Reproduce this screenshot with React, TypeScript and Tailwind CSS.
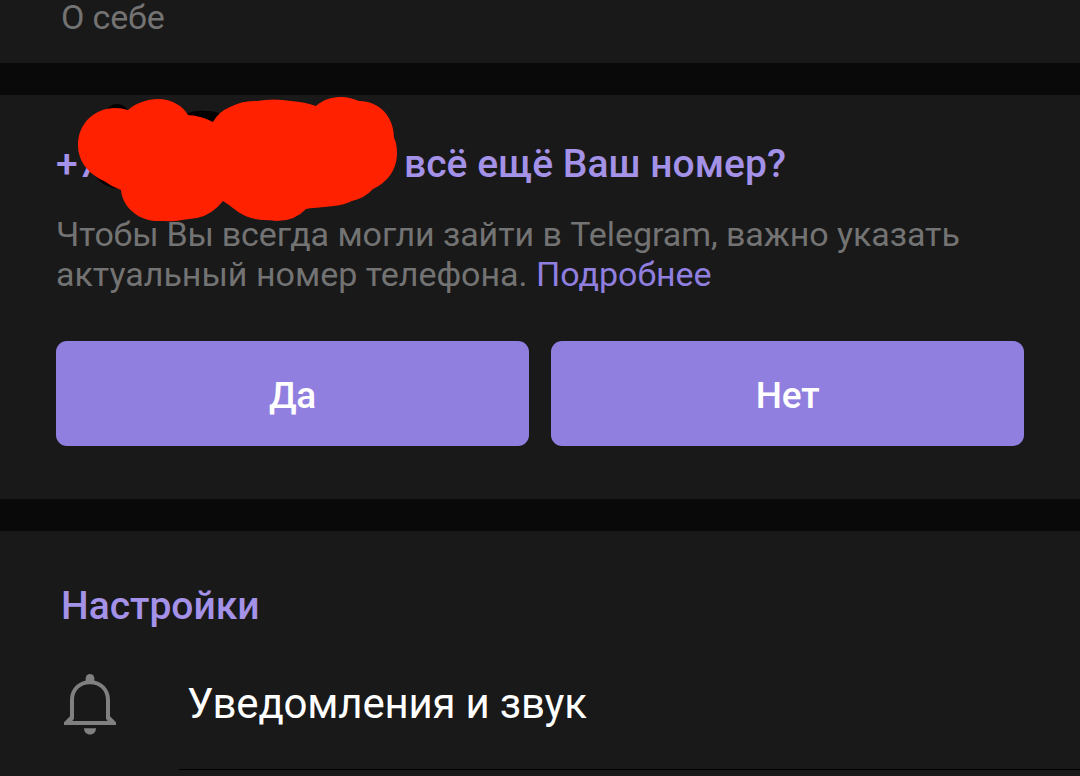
import type { ReactNode } from 'react';

interface ActionButtonProps {
  children: ReactNode;
}

function ActionButton({ children }: ActionButtonProps) {
  return (
    <button
      type="button"
      className="flex h-[105px] flex-1 items-center justify-center rounded-[11px] bg-[#917fe0] pt-1 text-[37px] font-medium tracking-[-0.2px] text-white"
    >
      {children}
    </button>
  );
}

function Divider() {
  return <div className="h-8 shrink-0 bg-[#090909]" />;
}

function BellIcon() {
  return (
    <svg viewBox="0 0 54 62" className="h-[62px] w-[54px] shrink-0" fill="#808080">
      <path d="M22.700 9V5.200a4.300 4.300 0 0 1 8.600 0V9Z" />
      <path
        fillRule="evenodd"
        d="M1 52v-2.800l6-6V27C7 15.500 15.500 7.300 27 7.300S47 15.500 47 27v16.200l6 6V52ZM9.300 48h35.400L43 45.800V27c0-9.500-6.500-15.700-16-15.700S11 17.500 11 27v18.800Z"
      />
      <path d="M21 55.200h12c0 3.800-2.500 6.300-6 6.300s-6-2.500-6-6.300Z" />
    </svg>
  );
}

function Scribble() {
  return (
    <svg
      viewBox="0 0 330 130"
      className="pointer-events-none absolute left-[72px] top-0 h-[130px] w-[330px]"
    >
      <path
        d="M33 18Q37 9 45 9Q52 9 56 15L60 22L34 24ZM110 23L116 18Q124 15 134 16Q142 16 147 18L150 28ZM24 82Q31 92 47 94L48 84Z"
        fill="#000"
      />
      <path
        d="M6 50C6 28 23 13 43 13Q50 13 56 15C64 8 75 4 86 4C100 4 111 11 116 20Q130 21 141 27Q146 17 158 12Q171 5 185 6Q202 3 219 6Q233 7 244 11C252 4 260 2 270 2Q277 2 287 6C307 6 322 21 322 43Q325 48 325 58C325 76 314 88 301 94Q293 103 280 106Q272 110 262 111L242 113Q238 113 234 114Q223 126 205 126Q198 125 190 125C173 124 162 114 157 110L151 106Q140 120 125 123Q117 124 110 125Q101 127 93 126L84 126C64 125 50 110 49 95Q40 92 32 86C17 79 6 67 6 50Z"
        fill="#ff2100"
      />
    </svg>
  );
}

export default function App() {
  return (
    <main className="flex h-[776px] w-[1080px] flex-col overflow-hidden bg-[#191919] font-['Roboto',sans-serif]">
      <section className="h-[63px] shrink-0 pl-[61px]">
        <p className="text-[34px] leading-[34px] tracking-[-0.15px] text-[#737373]">О себе</p>
      </section>

      <Divider />

      <section className="relative h-[404px] shrink-0 px-14 pt-[45px]">
        <h2 className="flex whitespace-nowrap text-[39px] font-medium leading-[48px] text-[#a491e8]">
          <span className="w-[348px]">+7</span>
          <span className="tracking-[0.05px]">всё ещё Ваш номер?</span>
        </h2>
        <Scribble />
        <p className="relative mt-[26px] whitespace-nowrap text-[34px] leading-10 text-[#737373]">
          <span className="tracking-[-0.25px]">Чтобы Вы </span>
          <span className="tracking-[-0.06px]">всегда могли зайти в Telegram, важно указать</span>
          <br />
          актуальный номер телефона. <a className="text-[#917fe0]">Подробнее</a>
        </p>
        <div className="mt-[47px] flex gap-[22px]">
          <ActionButton>Да</ActionButton>
          <ActionButton>Нет</ActionButton>
        </div>
      </section>

      <Divider />

      <section className="flex flex-1 flex-col">
        <h2 className="pl-[61px] pt-[51px] text-[39px] font-medium leading-[48px] text-[#a491e8]">
          Настройки
        </h2>
        <div className="mt-[43px] flex items-start pl-[63px]">
          <BellIcon />
          <span className="ml-[70px] mt-[6px] text-[42px] leading-[50px] tracking-[-0.2px] text-white">
            Уведомления и звук
          </span>
        </div>
        <div className="ml-[179px] mt-[34px] h-px bg-black" />
      </section>
    </main>
  );
}
